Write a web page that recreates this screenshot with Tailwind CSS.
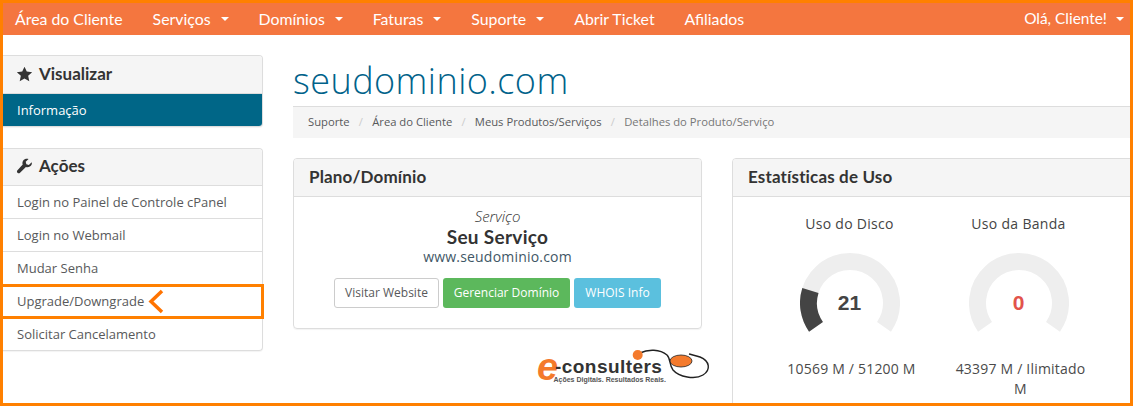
<!DOCTYPE html>
<html lang="pt"><head><meta charset="utf-8"><script src="https://cdn.jsdelivr.net/npm/@tailwindcss/browser@4"></script></head>
<body class="bg-white">
<div class="w-[1133px] h-[406px] box-border border-[3px] border-[#ff8000] overflow-hidden bg-white font-['Open_Sans',sans-serif] text-[13px] text-[#58595b]">
  <nav class="h-[32px] bg-[#f4763f] flex items-center text-white text-[15.85px] font-['Lato',sans-serif] pl-[12px] pr-[6px] gap-[30px]">
    <span>Área do Cliente</span>
    <span class="flex items-center gap-[10px]">Serviços <i class="w-0 h-0 border-x-[4px] border-x-transparent border-t-[4px] border-t-white"></i></span>
    <span class="flex items-center gap-[10px]">Domínios <i class="w-0 h-0 border-x-[4px] border-x-transparent border-t-[4px] border-t-white"></i></span>
    <span class="flex items-center gap-[10px]">Faturas <i class="w-0 h-0 border-x-[4px] border-x-transparent border-t-[4px] border-t-white"></i></span>
    <span class="flex items-center gap-[10px]">Suporte <i class="w-0 h-0 border-x-[4px] border-x-transparent border-t-[4px] border-t-white"></i></span>
    <span>Abrir Ticket</span>
    <span>Afiliados</span>
    <span class="ml-auto flex items-center gap-[9px]"><span class="text-[15.4px]">Olá, Cliente!</span> <i class="w-0 h-0 border-x-[4px] border-x-transparent border-t-[4px] border-t-white"></i></span>
  </nav>
  <div class="flex">
    <aside class="w-[260px] shrink-0 pt-[20px]">
      <section class="border border-l-0 border-[#ddd] rounded-r-[4px] overflow-hidden shadow-[0_1px_1px_rgba(0,0,0,0.05)]">
        <h3 class="h-[38px] bg-[#f5f5f5] border-b border-[#ddd] pl-[13px] pb-[2px] flex items-center gap-[6px] text-[17px] font-bold text-[#333] font-['Lato',sans-serif]">
          <svg class="w-[17px] h-[16px]" viewBox="0 0 24 24" fill="#333"><path d="M12 1l3.400 7.400 8.100.9-6 5.500 1.700 8L12 18.800 4.800 22.800l1.700-8-6-5.500 8.100-.9z"/></svg>
          Visualizar</h3>
        <div class="h-[32px] bg-[#006687] text-white pl-[14px] pt-[2px] flex items-center">Informação</div>
      </section>
      <section class="mt-[21px] border border-l-0 border-[#ddd] rounded-r-[4px] shadow-[0_1px_1px_rgba(0,0,0,0.05)]">
        <h3 class="h-[37px] bg-[#f5f5f5] rounded-tr-[4px] border-b border-[#ddd] pl-[13px] pb-[2px] flex items-center gap-[6px] text-[17px] font-bold text-[#333] font-['Lato',sans-serif]">
          <svg class="w-[17px] h-[16px]" viewBox="0 0 24 24" fill="#333"><path d="M22.800 6.200l-4.300 4.300-3.700-1-1-3.700 4.300-4.300c-3-.9-6.300-.1-8 2.200-1.300 1.800-1.500 4-.8 5.900L1.500 18.400c-1.100 1.100-1.100 2.800 0 3.800s2.700 1.100 3.800 0l8.800-8.800c1.900.7 4.100.5 5.900-.8 2.300-1.700 3.700-3.400 2.800-6.400z"/></svg>
          Ações</h3>
        <div class="h-[33px] border-b border-[#ddd] pl-[14px] pt-[2px] flex items-center">Login no Painel de Controle cPanel</div>
        <div class="h-[33px] border-b border-[#ddd] pl-[14px] pt-[2px] flex items-center">Login no Webmail</div>
        <div class="h-[33px] pl-[14px] flex items-center">Mudar Senha</div>
        <div class="h-[35px] -mt-px mr-[-2px] relative border-[3px] border-l-0 border-[#ff8000] pl-[14px] flex items-center gap-[4px]">Upgrade/Downgrade
          <svg class="w-[16px] h-[25px]" viewBox="0 0 16 25" fill="none" stroke="#ff7300" stroke-width="3.500"><path d="M14 2L3 12.500 14 23"/></svg>
        </div>
        <div class="h-[31px] pl-[14px] flex items-center">Solicitar Cancelamento</div>
      </section>
    </aside>
    <main class="ml-[30px] w-[837px] shrink-0 overflow-hidden">
      <h1 class="h-[71px] pt-[21px] text-[36px] leading-[50px] text-[#00628a] font-['Open_Sans',sans-serif] font-light tracking-[0.45px]">seudominio.com</h1>
      <div class="h-[32px] bg-[#f5f5f5] border-t border-[#ddd] pl-[15px] flex items-center text-[11.25px] gap-[9.2px] text-[#58595b]">
        <span>Suporte</span><span class="text-[#ccc]">/</span><span>Área do Cliente</span><span class="text-[#ccc]">/</span><span>Meus Produtos/Serviços</span><span class="text-[#ccc]">/</span><span class="text-[#777]">Detalhes do Produto/Serviço</span>
      </div>
      <div class="flex gap-[30px] mt-[20px]">
        <div class="w-[409px] shrink-0">
          <section class="h-[171px] border border-[#ddd] rounded-[4px] overflow-hidden shadow-[0_1px_1px_rgba(0,0,0,0.05)]">
            <h3 class="h-[38px] bg-[#f5f5f5] border-b border-[#ddd] pl-[15px] pb-[2px] flex items-center text-[17px] tracking-[0.15px] font-bold text-[#333] font-['Lato',sans-serif]">Plano/Domínio</h3>
            <div class="pt-[10px] text-center">
              <p class="italic text-[15px] leading-[19px] font-light text-[#333]">Serviço</p>
              <p class="text-[19px] leading-[21px] tracking-[0.3px] font-bold text-[#333] font-['Lato',sans-serif]">Seu Serviço</p>
              <p class="text-[14px] leading-[19px] tracking-[0.2px] text-[#3f5766]">www.seudominio.com</p>
              <div class="flex justify-center gap-[4px] mt-[12px] text-[12px]">
                <span class="h-[30px] w-[105px] flex items-center justify-center border border-[#ccc] rounded-[3px] text-[#58595b]">Visitar Website</span>
                <span class="h-[30px] w-[127px] flex items-center justify-center bg-[#5cb85c] rounded-[3px] text-white">Gerenciar Domínio</span>
                <span class="h-[30px] w-[87px] flex items-center justify-center bg-[#5bc0de] rounded-[3px] text-white">WHOIS Info</span>
              </div>
            </div>
          </section>
          <div class="flex justify-end mt-[12px]">
            <svg class="w-[175px] h-[46px] mr-[-8px]" viewBox="0 -8 175 46">
              <path d="M105 4C113 0 125 0 132 6 136 10 134 16 138 21 144 28 160 31 168 26 176 21 175 12 165 8 161 6.500 158 6 154 5" fill="none" stroke="#222" stroke-width="1.400"/>
              <ellipse cx="146" cy="12" rx="11" ry="6" fill="#f47a2c" stroke="#222" stroke-width=".8"/>
              <circle cx="102.700" cy="6" r="5" fill="#f47a2c"/>
              <text x="2" y="31" font-family="Liberation Sans" font-style="italic" font-weight="700" font-size="38" fill="#f47a2c">e</text>
              <text x="20" y="24" font-family="Liberation Sans" font-weight="700" font-size="19" letter-spacing="0.450" fill="#333">-consulters</text>
              <text x="18.500" y="33" font-family="Liberation Sans" font-weight="700" font-size="7" fill="#555">Ações Digitais. Resultados Reais.</text>
            </svg>
          </div>
        </div>
        <section class="w-[409px] shrink-0 h-[300px] border border-[#ddd] rounded-[4px] overflow-hidden">
          <h3 class="h-[38px] bg-[#f5f5f5] border-b border-[#ddd] pl-[15px] pb-[2px] flex items-center text-[17px] tracking-[0.15px] font-bold text-[#333] font-['Lato',sans-serif]">Estatísticas de Uso</h3>
          <div class="flex pl-[32px] pt-[17px] text-center text-[#4a4a4a]">
            <div class="w-[169px] px-[15px]">
              <p class="text-[14px] leading-[20px] font-medium tracking-[0.3px] text-[#444]">Uso do Disco</p>
              <div class="relative w-[100px] h-[100px] mx-auto mt-[19px]">
                <svg class="w-full h-full" viewBox="0 0 100 100" fill="none" stroke-width="17"><path d="M16 73.800A41.500 41.500 0 1 1 84 73.800" stroke="#eeeeee"/><path d="M16 73.800A41.500 41.500 0 0 1 10.400 37.500" stroke="#444444"/></svg>
                <span class="absolute inset-0 flex items-center justify-center text-[21px] font-bold text-[#444] font-['Liberation_Sans',sans-serif]">21</span>
              </div>
              <p class="mt-[6px] pl-[4px] leading-[20px] text-[14px] tracking-[0.2px]">10569 M / 51200 M</p>
            </div>
            <div class="w-[169px] px-[15px]">
              <p class="text-[14px] leading-[20px] font-medium tracking-[0.3px] text-[#444]">Uso da Banda</p>
              <div class="relative w-[100px] h-[100px] mx-auto mt-[19px]">
                <svg class="w-full h-full" viewBox="0 0 100 100" fill="none" stroke-width="17"><path d="M16 73.800A41.500 41.500 0 1 1 84 73.800" stroke="#eeeeee"/></svg>
                <span class="absolute inset-0 flex items-center justify-center text-[21px] font-bold text-[#e2534b] font-['Liberation_Sans',sans-serif]">0</span>
              </div>
              <p class="mt-[6px] pl-[4px] leading-[20px] text-[14px] tracking-[0.2px]">43397 M / Ilimitado M</p>
            </div>
          </div>
        </section>
      </div>
    </main>
  </div>
</div>
</body></html>
